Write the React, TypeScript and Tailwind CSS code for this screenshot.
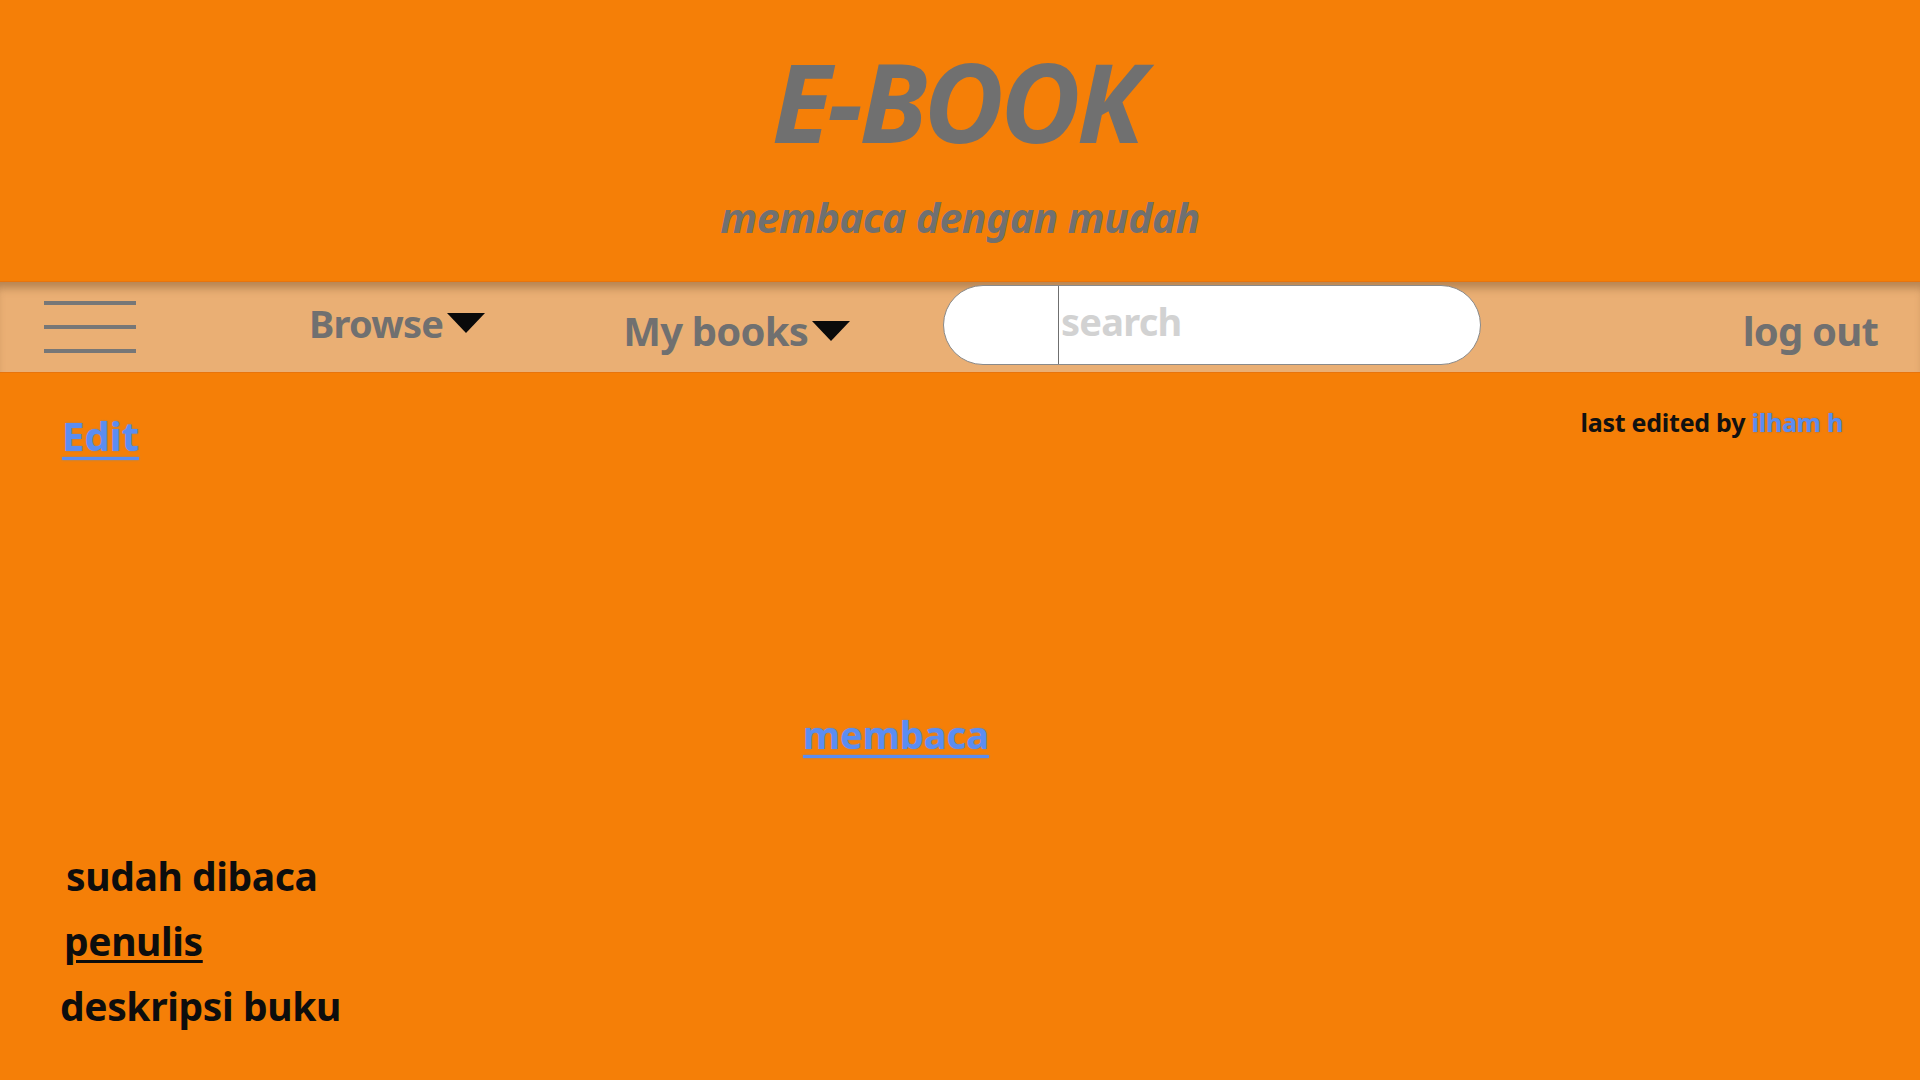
import React from 'react';

const NavArrow = () => (
  <svg width="38" height="20" viewBox="0 0 38 20" className="ml-1">
    <path d="M0 0 L38 0 L19 20 Z" fill="#0a0a0a" />
  </svg>
);

const Hamburger = () => (
  <div className="flex flex-col gap-[20px] w-[92px]">
    <span className="block h-[4px] bg-[#777777]" />
    <span className="block h-[4px] bg-[#777777]" />
    <span className="block h-[4px] bg-[#777777]" />
  </div>
);

const App: React.FC = () => {
  return (
    <div className="min-h-screen w-full bg-[#F57F07] font-['Noto_Sans',sans-serif] overflow-hidden">
      {/* Header */}
      <header className="h-[281px] flex flex-col items-center">
        <h1 className="mt-[45px] text-[110px] leading-none font-bold italic tracking-[-0.035em] text-[#707070] ml-[-8px]">
          E-BOOK
        </h1>
        <p className="mt-[42px] text-[41px] leading-none font-bold italic text-[#707070] tracking-[-0.015em]">
          membaca dengan mudah
        </p>
      </header>

      {/* Navigation */}
      <nav className="h-[92px] bg-[#EAAF74] border-y border-[#E8740C] shadow-[inset_0_10px_8px_-4px_rgba(120,80,40,0.45)] flex items-center">
        <div className="ml-[44px]">
          <Hamburger />
        </div>
        <div className="ml-[173px] flex items-center mt-[-8px]">
          <span className="text-[38px] font-bold text-[#707070] tracking-[-0.02em]">Browse</span>
          <NavArrow />
        </div>
        <div className="ml-[138px] flex items-center mt-[8px]">
          <span className="text-[40px] font-bold text-[#707070] tracking-[-0.02em]">My books</span>
          <NavArrow />
        </div>
        <div className="ml-[93px] mt-[-4px] w-[538px] h-[80px] bg-white rounded-full border border-[#8a8a8a] flex items-stretch overflow-hidden">
          <div className="w-[115px] shrink-0 border-r border-[#6f6f6f]" />
          <input
            className="flex-1 min-w-0 bg-transparent outline-none px-[2px] text-[38px] font-bold text-[#555] placeholder:text-[#d2d2d2] tracking-[-0.02em] pb-[8px]"
            placeholder="search"
          />
        </div>
        <div className="ml-auto mr-[42px] mt-[8px] text-[40px] font-bold text-[#707070] tracking-[-0.02em]">
          log out
        </div>
      </nav>

      {/* Content */}
      <main className="px-[62px] pt-[38px]">
        <div className="flex items-start justify-between">
          <a href="#" className="text-[40px] leading-tight font-bold text-[#5B8DF2] underline decoration-[3px] underline-offset-[6px] [text-shadow:0_0_2px_#8a8a8a]">
            Edit
          </a>
          <p className="mt-[-7px] mr-[15px] text-[25px] font-bold text-[#111] tracking-[-0.01em]">
            last edited by{' '}
            <a href="#" className="text-[#5B8DF2] [text-shadow:0_0_1.5px_#666]">ilham h</a>
          </p>
        </div>

        <div className="mt-[250px] pl-[741px]">
          <a href="#" className="text-[38px] leading-tight font-bold text-[#5B8DF2] underline decoration-[3px] underline-offset-[6px] [text-shadow:0_0_2px_#8a8a8a]">
            membaca
          </a>
        </div>

        <div className="mt-[84px] flex flex-col items-start text-[39px] leading-[65px] font-bold text-[#0d0d0d] tracking-[-0.01em]">
          <span className="ml-[4px]">sudah dibaca</span>
          <a href="#" className="ml-[2px] underline decoration-[3px] underline-offset-[4px]">penulis</a>
          <span className="ml-[-2px]">deskripsi buku</span>
        </div>
      </main>
    </div>
  );
};

export default App;
